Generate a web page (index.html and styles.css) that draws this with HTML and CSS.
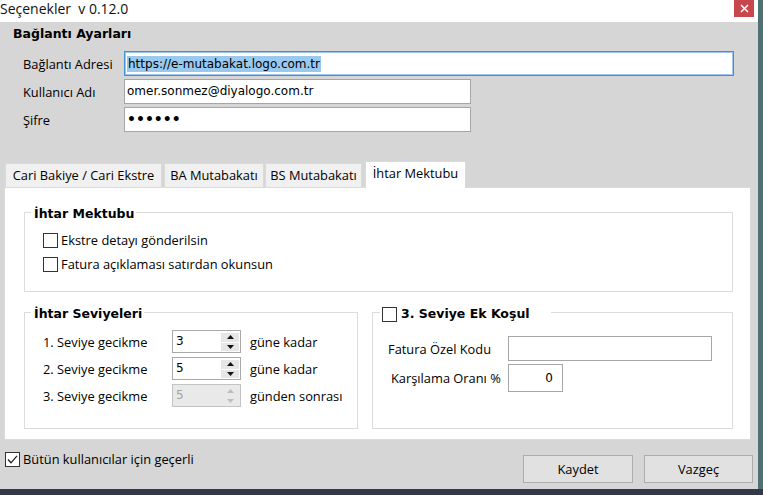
FILE: index.html
```html
<!DOCTYPE html>
<html lang="tr">
<head>
<meta charset="utf-8">
<title>Seçenekler</title>
<link rel="stylesheet" href="styles.css">
</head>
<body>
<div class="window">
  <header class="titlebar">
    <span class="title">Seçenekler  v 0.12.0</span>
    <span class="close"><svg width="9" height="9" viewBox="0 0 9 9"><path d="M1 1L8 8M8 1L1 8" stroke="#fff" stroke-width="1.5"/></svg></span>
  </header>
  <main class="client">
    <section class="conn">
      <h2 class="conn-title">Bağlantı Ayarları</h2>
      <div class="conn-form">
        <span class="label">Bağlantı Adresi</span>
        <div class="field field-url"><span class="sel">https://e-mutabakat.logo.com.tr</span></div>
        <span class="label">Kullanıcı Adı</span>
        <div class="field field-short">omer.sonmez@diyalogo.com.tr</div>
        <span class="label">Şifre</span>
        <div class="field field-short pw">••••••</div>
      </div>
    </section>

    <nav class="tabs">
      <span class="tab tab-cari">Cari Bakiye / Cari Ekstre</span>
      <span class="tab tab-ba">BA Mutabakatı</span>
      <span class="tab tab-bs">BS Mutabakatı</span>
      <span class="tab tab-active">İhtar Mektubu</span>
    </nav>

    <div class="tabpage">
      <fieldset class="group">
        <legend class="legend">İhtar Mektubu</legend>
        <div class="mektup-body">
          <div class="check-row"><span class="box"></span>Ekstre detayı gönderilsin</div>
          <div class="check-row"><span class="box"></span>Fatura açıklaması satırdan okunsun</div>
        </div>
      </fieldset>

      <div class="group-row">
        <fieldset class="group">
          <legend class="legend">İhtar Seviyeleri</legend>
          <div class="levels">
            <span>1. Seviye gecikme</span>
            <div class="spin"><span class="spin-val">3</span><span class="spin-btns"><span><svg width="7" height="4" viewBox="0 0 7 4"><path d="M0 4L3.5 0L7 4Z"/></svg></span><span><svg width="7" height="4" viewBox="0 0 7 4"><path d="M0 0L3.5 4L7 0Z"/></svg></span></span></div>
            <span class="unit">güne kadar</span>

            <span>2. Seviye gecikme</span>
            <div class="spin"><span class="spin-val">5</span><span class="spin-btns"><span><svg width="7" height="4" viewBox="0 0 7 4"><path d="M0 4L3.5 0L7 4Z"/></svg></span><span><svg width="7" height="4" viewBox="0 0 7 4"><path d="M0 0L3.5 4L7 0Z"/></svg></span></span></div>
            <span class="unit">güne kadar</span>

            <span>3. Seviye gecikme</span>
            <div class="spin spin-disabled"><span class="spin-val">5</span><span class="spin-btns"><span><svg width="7" height="4" viewBox="0 0 7 4"><path d="M0 4L3.5 0L7 4Z"/></svg></span><span><svg width="7" height="4" viewBox="0 0 7 4"><path d="M0 0L3.5 4L7 0Z"/></svg></span></span></div>
            <span class="unit">günden sonrası</span>
          </div>
        </fieldset>

        <fieldset class="group">
          <legend class="legend legend-check"><span class="legend-inner"><span class="box"></span>3. Seviye Ek Koşul</span></legend>
          <div class="extra">
            <span>Fatura Özel Kodu</span>
            <div class="field field-kod"></div>
            <span class="label-oran">Karşılama Oranı %</span>
            <div class="field field-oran">0</div>
          </div>
        </fieldset>
      </div>
    </div>

    <footer class="footer">
      <div class="check-row"><span class="box"><svg width="13" height="13" viewBox="0 0 13 13"><path d="M2 6.5L5 9.8L11 2.8" fill="none" stroke="#222" stroke-width="1.3"/></svg></span>Bütün kullanıcılar için geçerli</div>
      <div class="buttons">
        <button class="btn btn-save">Kaydet</button>
        <button class="btn btn-cancel">Vazgeç</button>
      </div>
    </footer>
  </main>
</div>
<div class="desk-bottom"></div>
</body>
</html>
```

FILE: styles.css
```css
* { box-sizing: border-box; }

html, body { margin: 0; height: 100%; }

body {
  background: #4e7173;
  font-family: "Open Sans", "Noto Sans", sans-serif;
  font-size: 12.85px;
  color: #000;
  overflow: hidden;
}

.window {
  width: 758px;
  height: 489px;
  display: flex;
  flex-direction: column;
  background: #d6d6d6;
}

.desk-bottom {
  height: 6px;
  background: #343949;
}

/* title bar */
.titlebar {
  height: 22px;
  flex: none;
  background: #fff;
  display: flex;
  justify-content: space-between;
  align-items: flex-start;
}

.title {
  font-size: 14px;
  line-height: 18px;
  margin-left: 0;
  white-space: pre;
  color: #111;
}

.close {
  width: 20px;
  height: 17px;
  margin-right: 4px;
  background: #c8474d;
  display: flex;
  align-items: center;
  justify-content: center;
}

.client {
  flex: 1;
  display: flex;
  flex-direction: column;
}

/* connection settings */
.conn { padding-top: 4px; }

.conn-title {
  margin: 0 0 9px 13px;
  font: bold 12.5px/16px "DejaVu Sans", sans-serif;
}

.conn-form {
  display: grid;
  grid-template-columns: 101px auto;
  grid-auto-rows: 25px;
  row-gap: 3px;
  margin-left: 23px;
  align-items: center;
}

.field {
  height: 25px;
  background: #fff;
  border: 1px solid #a6a6a6;
  font: 12px/23px "DejaVu Sans", sans-serif;
  padding-left: 2px;
  white-space: nowrap;
}

.field-url {
  width: 610px;
  border-color: #3f8fdf;
  box-shadow: inset 0 0 0 1px #9cc6ee;
  padding-left: 2px;
}

.sel {
  display: inline-block;
  background: #99c9ef;
  line-height: 16px;
  padding: 0 1px;
  vertical-align: middle;
}

.field-short { width: 347px; }

.pw {
  font: bold 14px/22px "DejaVu Sans", sans-serif;
  padding-left: 2px;
}

/* tabs */
.tabs {
  display: flex;
  align-items: flex-end;
  height: 26px;
  margin: 29px 0 0 5px;
}

.tab {
  height: 24px;
  text-align: center;
  background: #f0f0f0;
  border: 1px solid #dadada;
  border-bottom: none;
  white-space: nowrap;
  line-height: 23px;
}

.tab-cari { width: 157px; margin-right: 2px; }
.tab-ba { width: 100px; margin-right: 1px; }
.tab-bs { width: 97px; margin-right: 3px; }

.tab-active {
  width: 101px;
  height: 27px;
  line-height: 23px;
  margin-bottom: -1px;
  background: #fff;
  position: relative;
  z-index: 1;
}

.tabpage {
  margin-left: 4px;
  width: 747px;
  background: #fff;
  border: 1px solid #dadada;
  padding: 14px 17px 10px 19px;
}

/* groups */
.group {
  margin: 0;
  padding: 0;
  min-width: 0;
  border: 1px solid #dcdcdc;
}

.legend {
  margin-left: 6px;
  padding: 4px 2px 0 3px;
  font: bold 12.5px/16px "DejaVu Sans", sans-serif;
}

.legend-check {
  margin-left: 7px;
  padding: 4px 21px 0 2px;
}

.legend-inner {
  display: inline-flex;
  align-items: center;
  gap: 4px;
  height: 16px;
  vertical-align: top;
}

.mektup-body {
  padding: 6px 0 15px 18px;
}

.check-row {
  display: flex;
  align-items: center;
  gap: 3px;
  height: 24px;
  white-space: nowrap;
}

.box {
  width: 15px;
  height: 15px;
  flex: none;
  border: 1px solid #333;
  background: #fff;
  display: flex;
  align-items: center;
  justify-content: center;
}

.group-row {
  display: grid;
  grid-template-columns: 334px 1fr;
  column-gap: 14px;
  margin-top: 10px;
}

/* levels */
.levels {
  display: grid;
  grid-template-columns: 129px 69px auto;
  grid-auto-rows: 23px;
  row-gap: 4px;
  align-items: center;
  padding: 8px 0 21px 18px;
}

.unit { padding-left: 9px; white-space: nowrap; }

.spin {
  height: 23px;
  border: 1px solid #a9a9a9;
  background: #fff;
  display: flex;
  justify-content: space-between;
}

.spin-val {
  font: 12px/21px "DejaVu Sans", sans-serif;
  padding-left: 3px;
}

.spin-btns {
  width: 18px;
  margin: 2px 1px 1px 0;
  display: flex;
  flex-direction: column;
  gap: 1px;
}

.spin-btns > span {
  flex: 1;
  background: #e6e6e6;
  display: flex;
  align-items: center;
  justify-content: center;
}

.spin-btns svg { fill: #111; }

.spin-disabled {
  background: #e9e9e9;
  border-color: #c3c3c3;
}

.spin-disabled .spin-val { color: #a4a4a4; }
.spin-disabled .spin-btns > span { background: #e9e9e9; }
.spin-disabled .spin-btns svg { fill: #bdbdbd; }

/* extra condition */
.extra {
  display: grid;
  grid-template-columns: 120px auto;
  grid-template-rows: 25px 28px;
  row-gap: 3px;
  align-items: center;
  padding: 14px 0 0 15px;
}

.field-kod { width: 204px; }

.field-oran {
  width: 55px;
  height: 28px;
  line-height: 26px;
  text-align: right;
  padding-right: 9px;
}

.label-oran { margin-left: 3px; white-space: nowrap; }

/* footer */
.footer {
  flex: 1;
  display: flex;
  justify-content: space-between;
  align-items: flex-start;
  padding: 11px 5px 0 5px;
}

.footer .check-row { height: 16px; }

.buttons {
  display: flex;
  gap: 11px;
  margin-top: 4px;
}

.btn {
  height: 28px;
  background: #e1e1e1;
  border: 1px solid #adadad;
  font: 12.85px "Open Sans", "Noto Sans", sans-serif;
  color: #000;
  padding: 0;
}

.btn-save { width: 110px; }
.btn-cancel { width: 109px; }
```
